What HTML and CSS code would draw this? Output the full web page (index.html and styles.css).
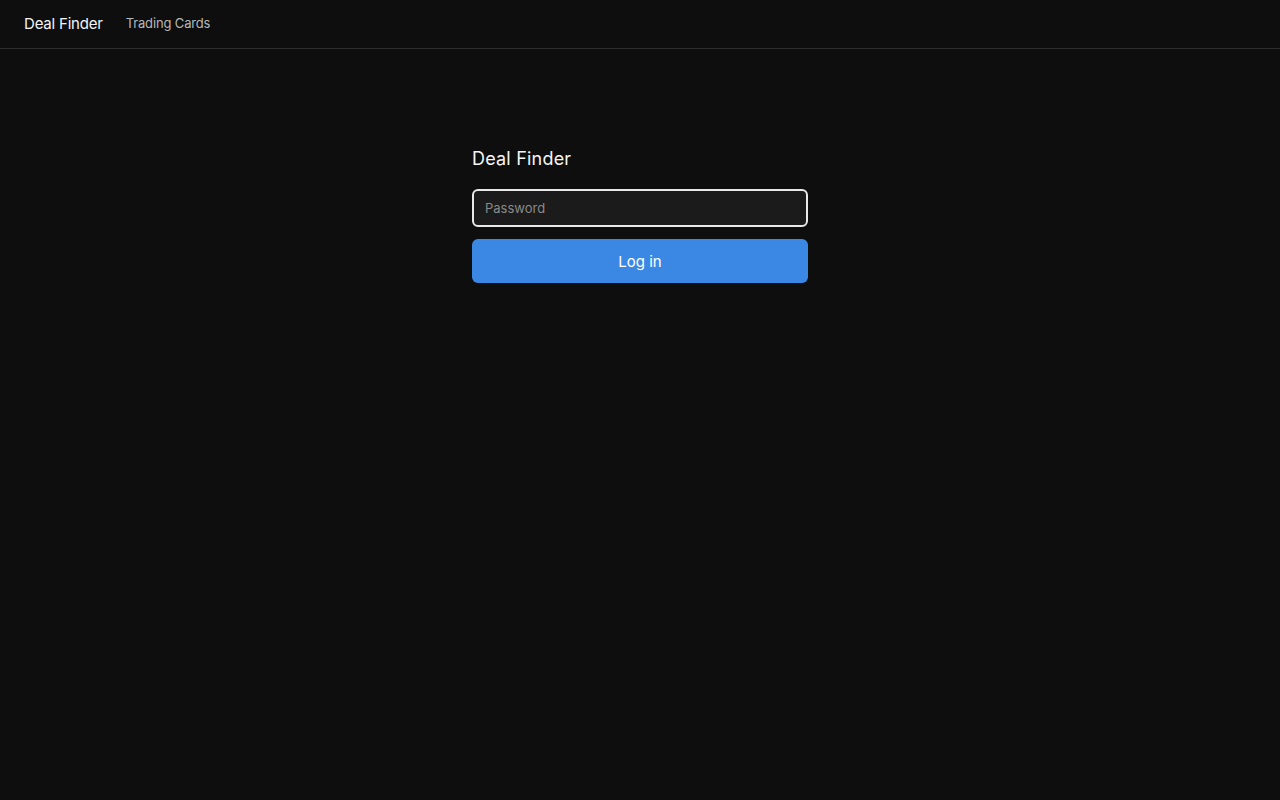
FILE: index.html
```html
<!DOCTYPE html>
<html>
<head>
<meta charset="utf-8">
<link rel="stylesheet" href="styles.css">
</head>
<body>
<nav class="nav">
  <span class="brand">Deal Finder</span>
  <a class="nav-link">Trading Cards</a>
</nav>
<main class="main">
  <form class="login">
    <h1 class="title">Deal Finder</h1>
    <input class="input" type="password" placeholder="Password" autofocus>
    <button class="btn" type="button">Log in</button>
  </form>
</main>
</body>
</html>
```
FILE: styles.css
```css
* { box-sizing: border-box; }
html, body { margin: 0; padding: 0; }
body {
  background: #0e0e0e;
  color: #f2f2f2;
  font-family: Inter, "Noto Sans", sans-serif;
  min-height: 100vh;
}
.nav {
  height: 49px;
  border-bottom: 1px solid #2c2c2c;
  display: flex;
  align-items: center;
  padding: 0 24px;
  gap: 23px;
}
.brand {
  font-size: 15px;
  letter-spacing: -0.2px;
  color: #f5f5f5;
  line-height: 1;
  padding-bottom: 1px;
}
.nav-link {
  font-size: 13px;
  letter-spacing: -0.15px;
  color: #b8b8b8;
  line-height: 1;
  padding-bottom: 1px;
}
.main {
  display: flex;
  justify-content: center;
  padding-top: 99px;
}
.login {
  width: 336px;
  display: flex;
  flex-direction: column;
}
.title {
  font-size: 18px;
  font-weight: 400;
  letter-spacing: 0.2px;
  line-height: 22px;
  margin: 0 0 19px 0;
  color: #f5f5f5;
}
.input {
  height: 38px;
  background: #1b1b1b;
  border: 2px solid #e8e8e8;
  border-radius: 6px;
  padding: 0 11px;
  font-family: inherit;
  font-size: 13px;
  color: #f2f2f2;
  outline: none;
  margin-bottom: 12px;
}
.input::placeholder { color: #8a8a8a; }
.btn {
  height: 44px;
  background: #3b88e4;
  border: none;
  border-radius: 6px;
  color: #ffffff;
  font-family: inherit;
  font-size: 15px;
  cursor: pointer;
}
```
